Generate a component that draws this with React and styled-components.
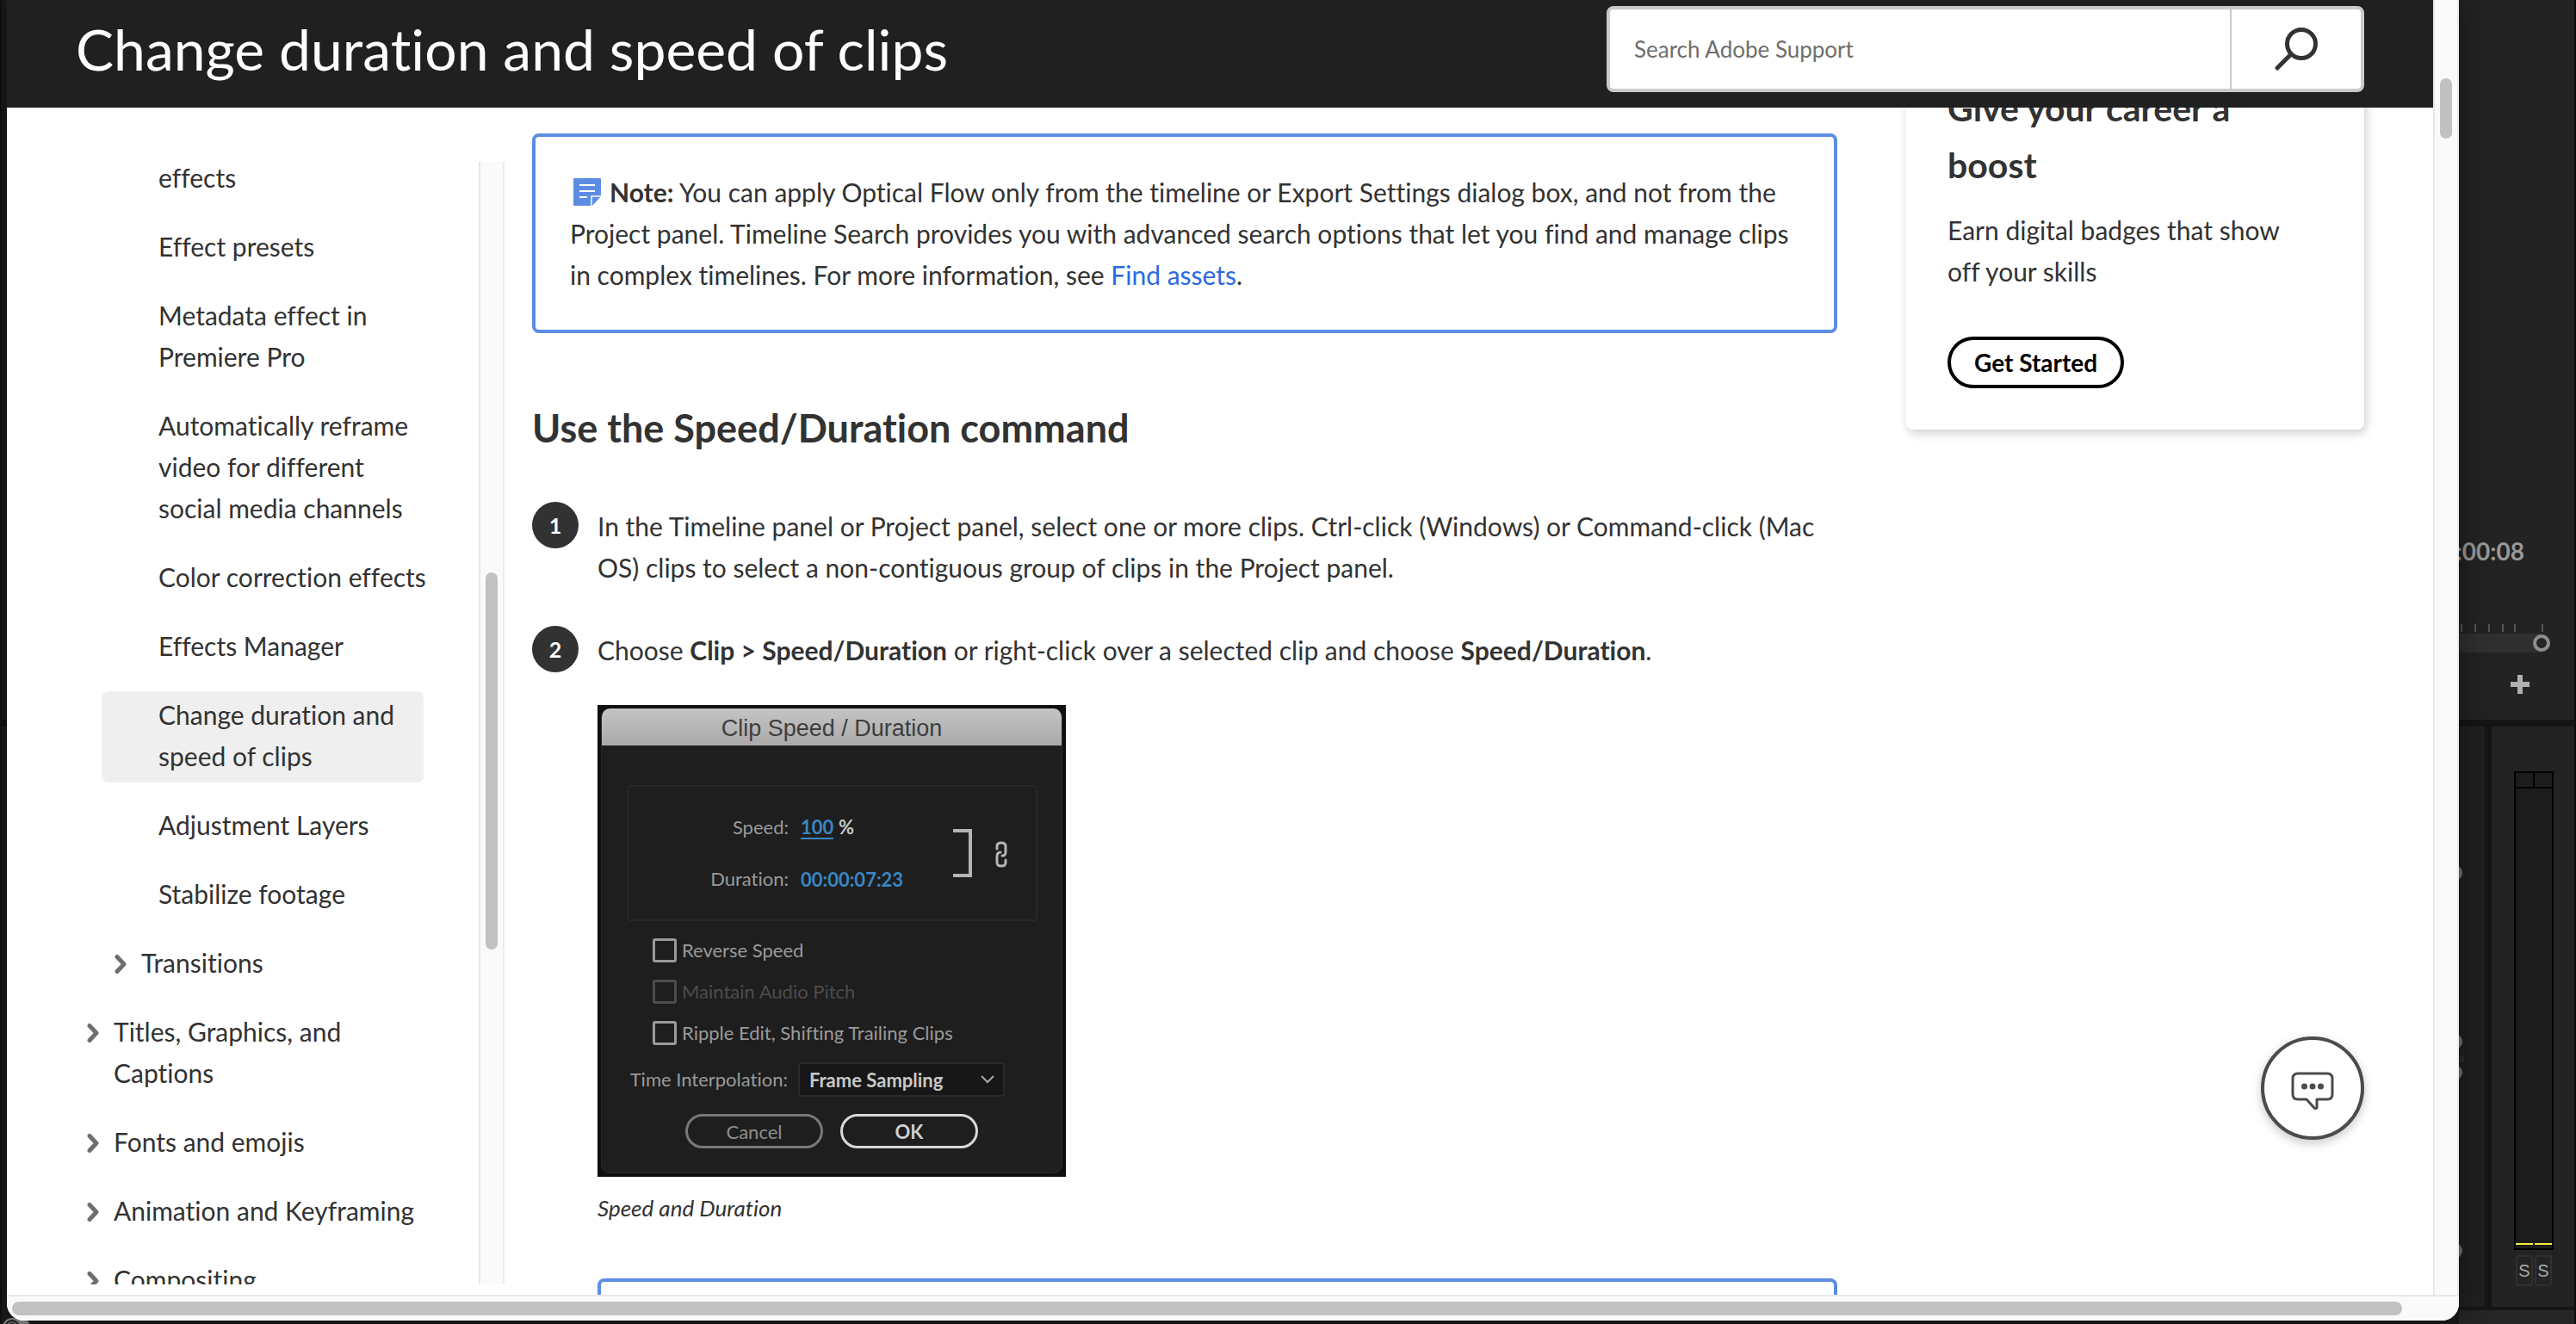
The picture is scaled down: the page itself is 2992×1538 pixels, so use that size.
import React from "react";
import styled, { createGlobalStyle, css } from "styled-components";

const GlobalStyle = createGlobalStyle`
  *, *::before, *::after { box-sizing: border-box; }
  body { margin: 0; background: #1a1a1a; font-variant-ligatures: none; }
  h1, h2, h3, p, ul, ol, figure { margin: 0; padding: 0; }
  ul, ol { list-style: none; }
  body, button, input, select { font-family: Lato, "Noto Sans", sans-serif; }
  button, input, select { margin: 0; }
`;

/* Desktop and browser window */

const Desktop = styled.div`
  position: relative;
  display: flex;
  height: 100vh;
  overflow: hidden;
  background: #1a1a1a;
`;

const LeftEdge = styled.div`
  flex: none;
  width: 8px;
  padding-top: 836px;
  background: #1b1b1b;
  border-left: 2px solid #101010;

  &::before {
    content: "";
    display: block;
    height: 8px;
    background: #101010;
  }
`;

const DockIcon = styled.svg`
  position: absolute;
  left: 0;
  bottom: 0;
  width: 40px;
  height: 10px;
`;

const Window = styled.div`
  position: relative;
  z-index: 1;
  flex: 1;
  min-width: 0;
  display: flex;
  flex-direction: column;
  margin-bottom: 4px;
  background: #fafafa;
  border-radius: 0 0 20px 20px;
  box-shadow: 0 0 40px rgba(0, 0, 0, 0.45);
  overflow: hidden;
`;

const Viewport = styled.div`
  flex: 1;
  min-height: 0;
  display: flex;
`;

const Page = styled.div`
  flex: 1;
  min-width: 0;
  display: flex;
  flex-direction: column;
  background: #fff;
  color: #323232;
  font-size: 30px;
  line-height: 48px;
`;

const ScrollTrack = styled.div`
  flex: none;
  background: #fafafa;
  ${(p) =>
    p.$horizontal
      ? css`
          height: 30px;
          padding: 6px 66px 0 6px;
          border-top: 2px solid #e8e8e8;
        `
      : css`
          width: 30px;
          padding: ${p.$start}px 6px 0 6px;
          border-left: 2px solid #e8e8e8;
          border-right: 2px solid #ececec;
        `}
`;

const ScrollThumb = styled.div`
  height: ${(p) => p.$length || 16}px;
  border-radius: 8px;
  background: #c1c1c1;
`;

/* Header */

const Header = styled.header`
  position: relative;
  z-index: 1;
  flex: none;
  display: flex;
  align-items: center;
  justify-content: space-between;
  height: 125px;
  padding: 0 80px 12px;
  background: #202020;
`;

const Title = styled.h1`
  color: #fff;
  font-size: 66px;
  font-weight: 400;
  line-height: 80px;
`;

const SearchForm = styled.form`
  display: flex;
  width: 880px;
  height: 100px;
  border: 4px solid #cacaca;
  border-radius: 8px;
  background: #fff;
`;

const SearchInput = styled.input`
  flex: 1;
  min-width: 0;
  padding: 0 28px;
  border: 0;
  background: none;
  color: #323232;
  font-size: 26px;
  outline: none;

  &::placeholder { color: #6e6e6e; opacity: 1; }
`;

const SearchButton = styled.button`
  display: grid;
  place-items: center;
  width: 152px;
  padding: 2px 0 0;
  border: 0;
  border-left: 2px solid #cacaca;
  background: none;
`;

/* Body columns */

const Columns = styled.div`
  flex: 1;
  min-height: 0;
  display: flex;
  padding-right: 80px;
  overflow: hidden;
`;

const Sidebar = styled.div`
  flex: none;
  display: flex;
  width: 578px;
  margin-bottom: 12px;
  overflow: hidden;
`;

const SidebarTrack = styled(ScrollTrack)`
  margin-top: 63px;
`;

const Nav = styled.nav`
  flex: 1;
  padding: 54px 64px 0 0;
`;

const NavList = styled.ul`
  display: flex;
  flex-direction: column;
  gap: 22px;
`;

const indents = { 1: [93, 0], 2: [125, 0], 3: [110, 66] };

const NavLink = styled.a`
  display: flex;
  gap: 17px;
  margin-left: ${(p) => indents[p.$level][0]}px;
  padding: 3px 0 7px ${(p) => indents[p.$level][1]}px;
  border-radius: 8px;
  background: ${(p) => (p.$current ? "#efefef" : "none")};
  color: #323232;
  text-decoration: none;
`;

const NavText = styled.span`
  margin-right: -6px;
`;

const NavChevron = styled.svg`
  flex: none;
  width: 14px;
  height: 24px;
  margin-top: 14px;
`;

const Article = styled.main`
  flex: 1;
  min-width: 0;
  margin: 0 80px 0 32px;
  padding-top: 30px;
`;

const Note = styled.div`
  min-height: 120px;
  padding: 40px;
  border: 4px solid #5c8ce4;
  border-radius: 8px;
`;

const NoteIcon = styled.svg`
  width: 32px;
  height: 32px;
  margin: 0 10px 0 4px;
  vertical-align: -4px;
`;

const TextLink = styled.a`
  color: #2a6ae4;
  text-decoration: none;
`;

const SectionTitle = styled.h2`
  margin: 80px 0 56px;
  font-size: 45px;
  font-weight: 700;
  line-height: 60px;
`;

const Steps = styled.ol`
  display: flex;
  flex-direction: column;
  gap: 44px;
`;

const Step = styled.li`
  display: flex;
  gap: 22px;
`;

const StepNumber = styled.span`
  flex: none;
  display: grid;
  place-items: center;
  width: 54px;
  height: 54px;
  border-radius: 50%;
  background: #323232;
  color: #fff;
  font-size: 25px;
  font-weight: 700;
`;

const StepBody = styled.div`
  flex: 1;
  padding-top: 4px;
`;

const Figure = styled.figure`
  margin: 40px 0 58px;
`;

const Caption = styled.figcaption`
  margin-top: 12px;
  font-size: 26px;
  font-style: italic;
`;

/* Clip Speed dialog */

const Dialog = styled.div`
  width: 544px;
  height: 548px;
  padding: 4px;
  background: #0f0f0f;
  color: #9a9a9a;
  font-size: 22px;
  line-height: 28px;
`;

const DialogFrame = styled.div`
  height: 100%;
  border: 1px solid #292929;
  border-top: 0;
  border-radius: 10px;
  background: #1e1e1e;
  overflow: hidden;
`;

const DialogTitle = styled.div`
  height: 43px;
  background: linear-gradient(#c4c4c4, #a9a9a9);
  color: #3e3e3e;
  font-family: "Liberation Sans", sans-serif;
  font-size: 27px;
  line-height: 46px;
  text-align: center;
`;

const TimingGroup = styled.div`
  display: flex;
  align-items: center;
  height: 158px;
  margin: 46px 28px 20px 29px;
  padding-right: 32px;
  border: 2px solid #282828;
  border-radius: 4px;
`;

const TimingFields = styled.div`
  flex: 1;
  display: flex;
  flex-direction: column;
  gap: 28px;
`;

const Field = styled.div`
  display: flex;
  align-items: center;
  height: 32px;
`;

const FieldLabel = styled.label`
  width: 186px;
  margin-right: 14px;
  text-align: right;
  white-space: nowrap;
`;

const ValueInput = styled.input`
  width: ${(p) => p.$width}px;
  height: 28px;
  padding: 0;
  border: 0;
  border-bottom: ${(p) => (p.$underlined ? "2px solid #3a86c4" : "0")};
  background: none;
  color: #3a86c4;
  font-size: 22px;
  font-weight: 700;
  line-height: 26px;
`;

const Unit = styled.span`
  margin-left: 6px;
  color: #c8c8c8;
  font-weight: 700;
`;

const GangedIcon = styled.svg`
  flex: none;
  width: 64px;
  height: 60px;
`;

const Options = styled.div`
  display: flex;
  flex-direction: column;
  gap: 20px;
  padding-left: 59px;
`;

const Option = styled.label`
  display: flex;
  align-items: center;
  gap: 6px;
  height: 28px;
  color: ${(p) => (p.$disabled ? "#4c4c4c" : "#9a9a9a")};
`;

const Checkbox = styled.input`
  appearance: none;
  width: 28px;
  height: 28px;
  margin: 0;
  border: 3px solid currentColor;
  border-radius: 3px;
  color: inherit;
`;

const SelectRow = styled.div`
  display: flex;
  align-items: center;
  margin: 20px 0 20px 30px;
`;

const SelectBox = styled.div`
  position: relative;
  width: 240px;
  margin-left: -2px;
`;

const Select = styled.select`
  appearance: none;
  width: 100%;
  height: 40px;
  padding: 0 11px;
  border: 2px solid #2a2a2a;
  border-radius: 4px;
  background: #171717;
  color: #c8c8c8;
  font-size: 22px;
  font-weight: 700;
`;

const SelectArrow = styled.svg`
  position: absolute;
  right: 11px;
  top: 14px;
  width: 18px;
  height: 12px;
  pointer-events: none;
`;

const Actions = styled.div`
  display: flex;
  justify-content: center;
  gap: 20px;
`;

const PillButton = styled.button`
  width: 160px;
  height: 40px;
  padding: 0;
  border: 3px solid ${(p) => (p.$primary ? "#d8d8d8" : "#787878")};
  border-radius: 20px;
  background: none;
  color: ${(p) => (p.$primary ? "#d0d0d0" : "#8e8e8e")};
  font-size: 22px;
  font-weight: ${(p) => (p.$primary ? 700 : 400)};
`;

/* Promo card */

const Card = styled.aside`
  flex: none;
  align-self: flex-start;
  width: 532px;
  margin-top: -80px;
  padding: 48px;
  border-radius: 8px;
  background: #fff;
  box-shadow: 2px 4px 12px rgba(0, 0, 0, 0.2);
`;

const CardTitle = styled.h3`
  margin-bottom: 18px;
  font-size: 41px;
  font-weight: 700;
  line-height: 66px;
`;

const CardText = styled.p`
  margin-bottom: 52px;
  padding-right: 40px;
`;

const CardButton = styled.button`
  height: 60px;
  padding: 0 27px;
  border: 4px solid #000;
  border-radius: 30px;
  background: #fff;
  color: #000;
  font-size: 28px;
  font-weight: 700;
`;

const ChatButton = styled.button`
  position: absolute;
  right: 110px;
  bottom: 210px;
  display: grid;
  place-items: center;
  width: 120px;
  height: 120px;
  padding: 6px 0 0;
  border: 4px solid #4b4b4b;
  border-radius: 50%;
  background: #fff;
  box-shadow: 0 4px 12px rgba(0, 0, 0, 0.22);
`;

/* Editor panels behind the window */

const Editor = styled.div`
  flex: none;
  display: flex;
  flex-direction: column;
  width: 136px;
  border-right: 2px solid #0c0c0c;
  background: #151515;
`;

const Monitor = styled.div`
  display: flex;
  flex-direction: column;
  align-items: flex-end;
  height: 836px;
  margin-bottom: 8px;
  background: #232323;
`;

const Timecode = styled.div`
  margin: 620px 58px 64px 0;
  color: #999;
  font-size: 28px;
  font-weight: 700;
  line-height: 40px;
`;

const MonitorControls = styled.svg`
  width: 134px;
  height: 90px;
`;

const LowerPanels = styled.div`
  flex: 1;
  display: flex;
  gap: 8px;
`;

const KnobPanel = styled.svg`
  width: 30px;
  height: 100%;
  background: #202020;
`;

const MeterPanel = styled.div`
  flex: 1;
  display: flex;
  flex-direction: column;
  align-items: center;
  gap: 6px;
  padding: 52px 0 24px 2px;
  background: #232323;
`;

const Meter = styled.div`
  flex: 1;
  display: flex;
  flex-direction: column;
  justify-content: space-between;
  width: 46px;
  padding-bottom: 4px;
  border: 2px solid #000;
  background: #1c1c1c;
`;

const MeterHead = styled.div`
  height: 18px;
  border-bottom: 2px solid #000;

  &::before {
    content: "";
    display: block;
    width: 22px;
    height: 16px;
    border-right: 2px solid #000;
  }
`;

const MeterLevels = styled.div`
  display: grid;
  grid-template-columns: 1fr 1fr;
  gap: 2px;

  &::before, &::after {
    content: "";
    height: 2px;
    background: #f4ec3c;
  }
`;

const SoloButtons = styled.div`
  display: flex;
  gap: 2px;
`;

const SoloButton = styled.button`
  width: 20px;
  height: 36px;
  padding: 0;
  border: 2px solid #303030;
  border-radius: 4px;
  background: none;
  color: #aaa;
  font-family: "Liberation Sans", sans-serif;
  font-size: 20px;
`;

const StatusStrip = styled.div`
  height: 16px;
  margin-top: 4px;
  background: #262626;
`;

const navItems = [
  { level: 3, text: "effects" },
  { level: 3, text: "Effect presets" },
  { level: 3, text: "Metadata effect in Premiere Pro" },
  { level: 3, text: "Automatically reframe video for different social media channels" },
  { level: 3, text: "Color correction effects" },
  { level: 3, text: "Effects Manager" },
  { level: 3, text: "Change duration and speed of clips", current: true },
  { level: 3, text: "Adjustment Layers" },
  { level: 3, text: "Stabilize footage" },
  { level: 2, text: "Transitions" },
  { level: 1, text: "Titles, Graphics, and Captions" },
  { level: 1, text: "Fonts and emojis" },
  { level: 1, text: "Animation and Keyframing" },
  { level: 1, text: "Compositing" },
];

function NavItem({ level, text, current }) {
  return (
    <li>
      <NavLink href="#" $level={level} $current={current} aria-current={current ? "page" : undefined}>
        {level < 3 && (
          <NavChevron viewBox="0 0 14 24" fill="none" stroke="#6e6e6e" strokeWidth="5" strokeLinecap="round" strokeLinejoin="round" aria-hidden="true">
            <path d="M3 3.5 L11 12 L3 20.5" />
          </NavChevron>
        )}
        <NavText>{text}</NavText>
      </NavLink>
    </li>
  );
}

function ClipSpeedDialog() {
  return (
    <Dialog>
      <DialogFrame>
        <DialogTitle>Clip Speed / Duration</DialogTitle>
        <TimingGroup>
          <TimingFields>
            <Field>
              <FieldLabel htmlFor="speed">Speed:</FieldLabel>
              <ValueInput id="speed" $width={38} $underlined defaultValue="100" />
              <Unit>%</Unit>
            </Field>
            <Field>
              <FieldLabel htmlFor="duration">Duration:</FieldLabel>
              <ValueInput id="duration" $width={130} defaultValue="00:00:07:23" />
            </Field>
          </TimingFields>
          <GangedIcon viewBox="0 0 64 60" fill="none" stroke="#b4b4b4" aria-hidden="true">
            <path d="M0 4 H20 V56 H0" strokeWidth="4" />
            <path d="M51 25 V22 Q51 18 56 18 Q61 18 61 22 V29 Q61 33 57 33" strokeWidth="3" strokeLinecap="round" />
            <path d="M61 38 V41 Q61 45 56 45 Q51 45 51 41 V34 Q51 29 55 29" strokeWidth="3" strokeLinecap="round" />
          </GangedIcon>
        </TimingGroup>
        <Options>
          <Option><Checkbox type="checkbox" />Reverse Speed</Option>
          <Option $disabled><Checkbox type="checkbox" disabled />Maintain Audio Pitch</Option>
          <Option><Checkbox type="checkbox" />Ripple Edit, Shifting Trailing Clips</Option>
        </Options>
        <SelectRow>
          <FieldLabel htmlFor="interpolation">Time Interpolation:</FieldLabel>
          <SelectBox>
            <Select id="interpolation" defaultValue="Frame Sampling">
              <option>Frame Sampling</option>
            </Select>
            <SelectArrow viewBox="0 0 18 12" fill="none" stroke="#a8a8a8" strokeWidth="2" aria-hidden="true">
              <path d="M2 2 L9 9 L16 2" />
            </SelectArrow>
          </SelectBox>
        </SelectRow>
        <Actions>
          <PillButton type="button">Cancel</PillButton>
          <PillButton type="button" $primary>OK</PillButton>
        </Actions>
      </DialogFrame>
    </Dialog>
  );
}

function EditorPanels() {
  const ticks = [2, 18, 34, 50, 64, 96];
  return (
    <Editor>
      <Monitor>
        <Timecode>:00:08</Timecode>
        <MonitorControls viewBox="0 0 134 90" aria-hidden="true">
          {ticks.map((x) => (
            <rect key={x} x={x} y="1" width="2" height="9" fill="#555" />
          ))}
          <path d="M0 12 H95 A11 11 0 0 1 95 34 H0 Z" fill="#303030" />
          <circle cx="96" cy="23" r="8" fill="#262626" stroke="#8e8e8e" strokeWidth="4" />
          <path d="M60 71 H82 M71 60 V82" stroke="#b0b0b0" strokeWidth="6" />
        </MonitorControls>
      </Monitor>
      <LowerPanels>
        <KnobPanel aria-hidden="true">
          {[170, 366, 402, 609].map((y) => (
            <circle key={y} cx="-5" cy={y} r="9" fill="#777" />
          ))}
          <rect x="0" y="382" width="6" height="8" fill="#2c2c2c" />
        </KnobPanel>
        <MeterPanel>
          <Meter>
            <MeterHead />
            <MeterLevels />
          </Meter>
          <SoloButtons>
            <SoloButton type="button">S</SoloButton>
            <SoloButton type="button">S</SoloButton>
          </SoloButtons>
        </MeterPanel>
      </LowerPanels>
      <StatusStrip />
    </Editor>
  );
}

export default function App() {
  return (
    <Desktop>
      <GlobalStyle />
      <LeftEdge />
      <DockIcon viewBox="0 0 40 10" fill="none" aria-hidden="true">
        <circle cx="24" cy="14" r="11" fill="#8a8a8a" />
        <circle cx="14" cy="14" r="10" fill="#202020" stroke="#8a8a8a" strokeWidth="2" />
        <circle cx="14" cy="14" r="6" stroke="#6a6a6a" strokeWidth="2" />
      </DockIcon>
      <Window>
        <Viewport>
          <Page>
            <Header>
              <Title>Change duration and speed of clips</Title>
              <SearchForm role="search">
                <SearchInput type="search" placeholder="Search Adobe Support" aria-label="Search Adobe Support" />
                <SearchButton type="button" aria-label="Search">
                  <svg width="52" height="52" viewBox="0 0 52 52" fill="none" stroke="#323232" strokeWidth="5" strokeLinecap="round" aria-hidden="true">
                    <circle cx="32" cy="19" r="16.500" />
                    <path d="M20 31 L4 47" />
                  </svg>
                </SearchButton>
              </SearchForm>
            </Header>
            <Columns>
              <Sidebar>
                <Nav aria-label="User guide">
                  <NavList>
                    {navItems.map((item) => (
                      <NavItem key={item.text} {...item} />
                    ))}
                  </NavList>
                </Nav>
                <SidebarTrack $start={477}>
                  <ScrollThumb $length={438} />
                </SidebarTrack>
              </Sidebar>
              <Article>
                <Note>
                  <p>
                    <NoteIcon viewBox="0 0 32 32" aria-hidden="true">
                      <path d="M1 0 H31 Q32 0 32 1 V21 L22 32 H1 Q0 32 0 31 V1 Q0 0 1 0 Z" fill="#5c8ce4" />
                      <path d="M7 8 H25 M7 15 H25 M7 22 H16" stroke="#fff" strokeWidth="2" />
                      <path d="M21 32 V21 H32" fill="none" stroke="#fff" strokeWidth="1.500" />
                    </NoteIcon>
                    <strong>Note:</strong> You can apply Optical Flow only from the timeline or Export Settings
                    dialog box, and not from the Project panel. Timeline Search provides you with advanced search
                    options that let you find and manage clips in complex timelines. For more information, see{" "}
                    <TextLink href="#">Find assets</TextLink>.
                  </p>
                </Note>
                <SectionTitle>Use the Speed/Duration command</SectionTitle>
                <Steps>
                  <Step>
                    <StepNumber>1</StepNumber>
                    <StepBody>
                      <p>
                        In the Timeline panel or Project panel, select one or more clips. Ctrl-click (Windows) or
                        Command-click (Mac OS) clips to select a non-contiguous group of clips in the Project panel.
                      </p>
                    </StepBody>
                  </Step>
                  <Step>
                    <StepNumber>2</StepNumber>
                    <StepBody>
                      <p>
                        Choose <strong>Clip &gt; Speed/Duration</strong> or right-click over a selected clip and
                        choose <strong>Speed/Duration</strong>.
                      </p>
                      <Figure>
                        <ClipSpeedDialog />
                        <Caption>Speed and Duration</Caption>
                      </Figure>
                      <Note />
                    </StepBody>
                  </Step>
                </Steps>
              </Article>
              <Card>
                <CardTitle>Give your career a boost</CardTitle>
                <CardText>Earn digital badges that show off your skills</CardText>
                <CardButton type="button">Get Started</CardButton>
              </Card>
            </Columns>
          </Page>
          <ScrollTrack $start={91}>
            <ScrollThumb $length={70} />
          </ScrollTrack>
        </Viewport>
        <ScrollTrack $horizontal>
          <ScrollThumb />
        </ScrollTrack>
        <ChatButton type="button" aria-label="Open chat">
          <svg width="50" height="44" viewBox="0 0 50 44" fill="none" stroke="#4b4b4b" strokeWidth="3" strokeLinejoin="round" aria-hidden="true">
            <path d="M8 2 H42 Q48 2 48 8 V26 Q48 32 42 32 H30 V42 Q28 43 27 42 L18 32 H8 Q2 32 2 26 V8 Q2 2 8 2 Z" />
            <g fill="#4b4b4b" stroke="none">
              <circle cx="15.500" cy="17" r="3.500" />
              <circle cx="25" cy="17" r="3.500" />
              <circle cx="34.500" cy="17" r="3.500" />
            </g>
          </svg>
        </ChatButton>
      </Window>
      <EditorPanels />
    </Desktop>
  );
}
